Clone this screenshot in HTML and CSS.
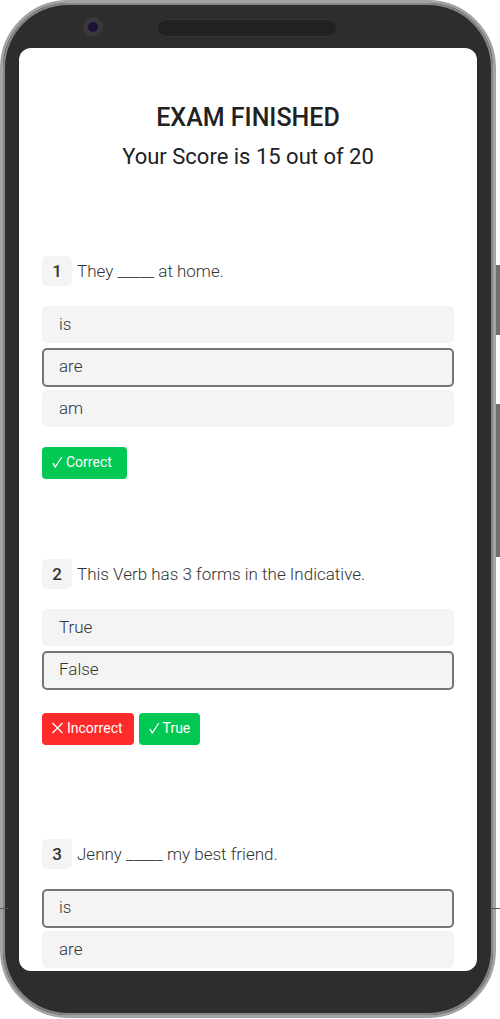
FILE: index.html
```html
<!DOCTYPE html>
<html lang="en">
<head>
<meta charset="utf-8">
<title>Exam Finished</title>
<link rel="stylesheet" href="styles.css">
</head>
<body>
<div class="tick tick-left"></div>
<div class="tick tick-right"></div>
<div class="side-btn side-btn-power"></div>
<div class="side-btn side-btn-volume"></div>
<div class="phone">
  <div class="top-bar">
    <span class="camera"></span>
    <span class="speaker"></span>
  </div>
  <main class="screen">
    <header class="head">
      <h1 class="title">EXAM FINISHED</h1>
      <p class="score">Your Score is 15 out of 20</p>
    </header>

    <section class="question">
      <div class="q-line"><span class="q-num">1</span><span class="q-text">They _____ at home.</span></div>
      <ul class="options">
        <li class="option">is</li>
        <li class="option selected">are</li>
        <li class="option">am</li>
      </ul>
      <div class="results">
        <span class="badge good badge-correct"><svg class="badge-icon" viewBox="0 0 14 12" aria-hidden="true"><path d="M1 7 L3.2 11 L9.8 1"/></svg>Correct</span>
      </div>
    </section>

    <section class="question question-wide">
      <div class="q-line"><span class="q-num">2</span><span class="q-text">This Verb has 3 forms in the Indicative.</span></div>
      <ul class="options">
        <li class="option">True</li>
        <li class="option selected">False</li>
      </ul>
      <div class="results">
        <span class="badge bad badge-incorrect"><svg class="badge-icon icon-x" viewBox="0 0 15 12" aria-hidden="true"><path d="M0.5 1 L10.5 11 M10.5 1 L0.5 11"/></svg>Incorrect</span>
        <span class="badge good"><svg class="badge-icon" viewBox="0 0 14 12" aria-hidden="true"><path d="M1 7 L3.2 11 L9.8 1"/></svg>True</span>
      </div>
    </section>

    <section class="question">
      <div class="q-line"><span class="q-num">3</span><span class="q-text">Jenny _____ my best friend.</span></div>
      <ul class="options">
        <li class="option selected">is</li>
        <li class="option">are</li>
      </ul>
    </section>
  </main>
</div>
</body>
</html>
```
FILE: styles.css
```css
* { box-sizing: border-box; }
html, body { margin: 0; padding: 0; background: #fff; height: 1019px; overflow: hidden; }
body { font-family: Roboto, "Liberation Sans", sans-serif; position: relative; }

.phone {
  position: relative;
  width: 496px;
  height: 1018px;
  background: #2d2c2e;
  border: 3px solid #a3a3a3;
  border-radius: 68px;
  padding: 0 16px;
  display: flex;
  flex-direction: column;
  box-shadow: inset 0 0 0 2px #868686;
}
.top-bar {
  height: 45px;
  flex: none;
  display: flex;
  align-items: flex-start;
  padding: 14px 0 0 64px;
}
.camera {
  width: 20px;
  height: 20px;
  border-radius: 50%;
  background: #1c1038;
  border: 5px solid #38373a;
}
.speaker {
  width: 180px;
  height: 18px;
  margin: 2px 0 0 54px;
  border-radius: 9px;
  background: #232122;
  border: 1px solid #343335;
}
.screen {
  width: 458px;
  height: 923px;
  background: #fff;
  border-radius: 12px;
  overflow: hidden;
  padding: 0 23px;
  flex: none;
}
.head { text-align: center; padding-top: 55px; margin-bottom: 85px; }
.title { margin: 0; font-size: 25px; line-height: 30px; font-weight: 500; color: #212121; }
.score { margin: 10px 0 0; font-size: 22px; line-height: 28px; font-weight: 400; color: #212121; }

.question { margin-bottom: 80px; }
.question-wide { margin-bottom: 94px; }
.q-line { display: flex; align-items: center; gap: 5px; margin-bottom: 20px; }
.q-num {
  width: 30px;
  height: 30px;
  background: #f4f4f4;
  border-radius: 5px;
  display: flex;
  align-items: center;
  justify-content: center;
  font-size: 17px;
  font-weight: 500;
  color: #333;
}
.q-text { font-size: 17px; font-weight: 300; color: #333; }

.options { list-style: none; margin: 0; padding: 0; display: flex; flex-direction: column; gap: 3px; }
.option {
  height: 37px;
  line-height: 37px;
  padding: 0 17px;
  background: #f4f4f4;
  border-radius: 5px;
  font-size: 17px;
  font-weight: 300;
  color: #333;
}
.option.selected {
  height: 39px;
  line-height: 33px;
  padding: 0 15px;
  border: 2px solid #757575;
}
.option + .option.selected { margin-top: 2px; }
.option.selected:last-child { margin-bottom: 3px; }

.results { display: flex; gap: 5px; margin-top: 20px; }
.badge {
  height: 32px;
  padding: 0 10px 2px;
  border-radius: 4px;
  color: #fff;
  font-size: 14px;
  font-weight: 400;
  display: flex;
  align-items: center;
}
.badge-correct { padding-right: 15px; }
.badge-incorrect { padding-right: 11px; }
.badge-icon {
  width: 14px;
  height: 12px;
  flex: none;
  fill: none;
  stroke: #fff;
  stroke-width: 1.3;
}
.icon-x { width: 15px; }
.good { background: #00c853; }
.bad { background: #ff2a2a; }

.tick { position: absolute; top: 908px; height: 1px; background: #555; z-index: 2; }
.tick-left { left: 0; width: 8px; }
.tick-right { left: 490px; width: 10px; }
.side-btn { position: absolute; left: 496px; width: 4px; background: #6f6f6f; }
.side-btn-power { top: 265px; height: 70px; }
.side-btn-volume { top: 404px; height: 153px; }
```
